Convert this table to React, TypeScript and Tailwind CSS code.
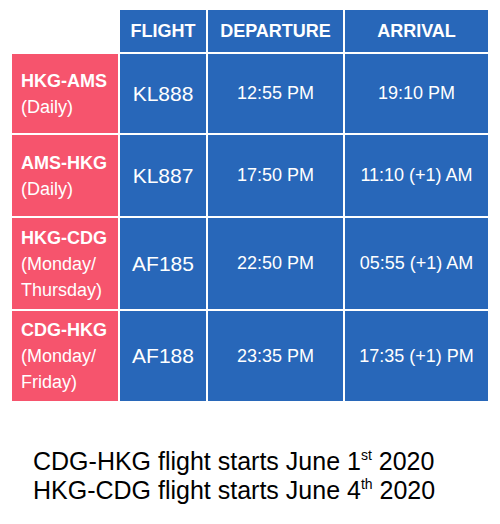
import React from 'react';

const rows = [
  { route: 'HKG-AMS', days: ['(Daily)'], flight: 'KL888', dep: '12:55 PM', arr: '19:10 PM', h: 'h-[79px]' },
  { route: 'AMS-HKG', days: ['(Daily)'], flight: 'KL887', dep: '17:50 PM', arr: '11:10 (+1) AM', h: 'h-[81px]' },
  { route: 'HKG-CDG', days: ['(Monday/', 'Thursday)'], flight: 'AF185', dep: '22:50 PM', arr: '05:55 (+1) AM', h: 'h-[91px]' },
  { route: 'CDG-HKG', days: ['(Monday/', 'Friday)'], flight: 'AF188', dep: '23:35 PM', arr: '17:35 (+1) PM', h: 'h-[90px]' },
];

export default function App() {
  return (
    <div className="w-[500px] h-[524px] bg-white font-['Liberation_Sans',Arial,sans-serif] pt-[10px] pl-[12px]">
      {/* schedule table */}
      <div className="grid grid-cols-[106px_86px_135px_143px] gap-[2px] w-max">
        <div className="h-[42px]" />
        {['FLIGHT', 'DEPARTURE', 'ARRIVAL'].map((t) => (
          <div key={t} className="h-[42px] bg-[#2867b9] text-white font-bold text-[18px] flex items-center justify-center">
            {t}
          </div>
        ))}

        {rows.map((r) => (
          <React.Fragment key={r.route}>
            <div className={`${r.h} bg-[#f6546d] text-white text-[18px] leading-[26px] flex flex-col justify-center pl-[9px]`}>
              <span className="font-bold">{r.route}</span>
              {r.days.map((d) => (
                <span key={d}>{d}</span>
              ))}
            </div>
            <div className={`${r.h} bg-[#2867b9] text-white text-[21px] flex items-center justify-center`}>{r.flight}</div>
            <div className={`${r.h} bg-[#2867b9] text-white text-[18px] flex items-center justify-center`}>{r.dep}</div>
            <div className={`${r.h} bg-[#2867b9] text-white text-[18px] flex items-center justify-center`}>{r.arr}</div>
          </React.Fragment>
        ))}
      </div>

      {/* start dates */}
      <div className="mt-[46px] pl-[21px] text-black text-[25px] leading-[29px]">
        <p>
          CDG-HKG flight starts June 1<sup className="text-[14px] -top-[0.7em]">st</sup> 2020
        </p>
        <p>
          HKG-CDG flight starts June 4<sup className="text-[14px] -top-[0.7em]">th</sup> 2020
        </p>
      </div>
    </div>
  );
}
